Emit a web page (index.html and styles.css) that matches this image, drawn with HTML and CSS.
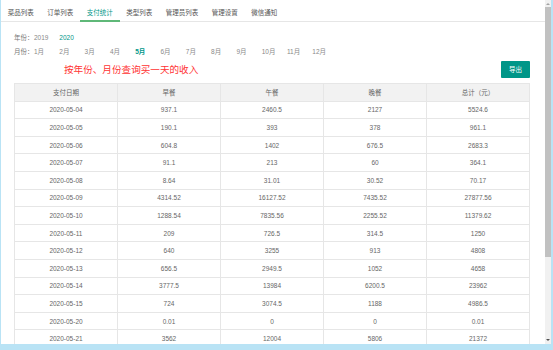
FILE: index.html
```html
<!DOCTYPE html>
<html lang="zh-CN">
<head>
  <meta charset="UTF-8">
  <meta name="viewport" content="width=device-width, initial-scale=1.0">
  <title>支付统计</title>
  <link rel="stylesheet" href="styles.css">
</head>
<body>
  <div class="frame">
    <div class="page">
      <ul class="tabs">
        <li>菜品列表</li>
        <li>订单列表</li>
        <li class="active">支付统计</li>
        <li>类型列表</li>
        <li>管理员列表</li>
        <li>管理设置</li>
        <li>微信通知</li>
      </ul>

      <div class="content">
        <div class="filter">
          <span class="label">年份：</span>
          <a>2019</a><a class="on">2020</a>
        </div>
        <div class="filter">
          <span class="label">月份：</span>
          <a>1月</a><a>2月</a><a>3月</a><a>4月</a><a class="on bold">5月</a><a>6月</a>
          <a>7月</a><a>8月</a><a>9月</a><a>10月</a><a>11月</a><a>12月</a>
        </div>

        <div class="toolbar">
          <span class="tip">按年份、月份查询买一天的收入</span>
          <button class="btn">导出</button>
        </div>

        <table class="stats">
          <thead>
            <tr><th>支付日期</th><th>早餐</th><th>午餐</th><th>晚餐</th><th>总计（元）</th></tr>
          </thead>
          <tbody>
            <tr><td>2020-05-04</td><td>937.1</td><td>2460.5</td><td>2127</td><td>5524.6</td></tr>
            <tr><td>2020-05-05</td><td>190.1</td><td>393</td><td>378</td><td>961.1</td></tr>
            <tr><td>2020-05-06</td><td>604.8</td><td>1402</td><td>676.5</td><td>2683.3</td></tr>
            <tr><td>2020-05-07</td><td>91.1</td><td>213</td><td>60</td><td>364.1</td></tr>
            <tr><td>2020-05-08</td><td>8.64</td><td>31.01</td><td>30.52</td><td>70.17</td></tr>
            <tr><td>2020-05-09</td><td>4314.52</td><td>16127.52</td><td>7435.52</td><td>27877.56</td></tr>
            <tr><td>2020-05-10</td><td>1288.54</td><td>7835.56</td><td>2255.52</td><td>11379.62</td></tr>
            <tr><td>2020-05-11</td><td>209</td><td>726.5</td><td>314.5</td><td>1250</td></tr>
            <tr><td>2020-05-12</td><td>640</td><td>3255</td><td>913</td><td>4808</td></tr>
            <tr><td>2020-05-13</td><td>656.5</td><td>2949.5</td><td>1052</td><td>4658</td></tr>
            <tr><td>2020-05-14</td><td>3777.5</td><td>13984</td><td>6200.5</td><td>23962</td></tr>
            <tr><td>2020-05-15</td><td>724</td><td>3074.5</td><td>1188</td><td>4986.5</td></tr>
            <tr><td>2020-05-20</td><td>0.01</td><td>0</td><td>0</td><td>0.01</td></tr>
            <tr><td>2020-05-21</td><td>3562</td><td>12004</td><td>5806</td><td>21372</td></tr>
          </tbody>
        </table>
      </div>
    </div>

    <!-- fake iframe scrollbar -->
    <div class="scrollbar">
      <span class="arrow up"></span>
      <div class="thumb"></div>
      <span class="arrow down"></span>
    </div>
  </div>
</body>
</html>
```

FILE: styles.css
```css
:root {
  --teal: #009688;
  --green-line: #5fb878;
  --line: #e6e6e6;
  --frame: #b9e3f5;
}
* { box-sizing: border-box; margin: 0; padding: 0; }
html, body {
  width: 553px; height: 350px; overflow: hidden;
  font-family: "Liberation Sans", "Noto Sans CJK SC", sans-serif;
  background: var(--frame);
}
/* Outer frame with light blue edges */
.frame {
  display: flex; width: 553px; height: 350px;
  padding: 0 2px 6px 1px;
  background: var(--frame);
}
.page {
  flex: 1; background: #fff; overflow: hidden;
}
/* Tabs */
.tabs {
  list-style: none; display: flex;
  height: 22px; border-bottom: 1px solid var(--line);
}
.tabs li {
  position: relative;
  padding: 4px 6.75px 0; line-height: 17px;
  font-size: 6.5px; color: #555; white-space: nowrap;
}
.tabs li.active { color: var(--teal); }
.tabs li.active::after {
  content: ''; position: absolute; left: 0; right: 0; bottom: -1px;
  border-bottom: 2px solid var(--green-line);
}
/* Year / month filters */
.content { padding: 8px 15px 0 13px; }
.filter {
  display: flex; height: 14px; align-items: center;
  font-size: 6.5px; color: #888;
}
.filter .label { width: 20px; color: #777; }
.filter a { width: 25.3px; }
.filter a.on { color: var(--teal); }
.filter a.bold { font-weight: bold; }
.toolbar {
  display: flex; align-items: center; justify-content: space-between;
  height: 17px; margin: 2.7px 0 5px;
}
.tip { margin-left: 50px; font-size: 9.6px; color: #f33; }
.btn {
  width: 29px; height: 17px; border: none; border-radius: 1px;
  background: var(--teal); color: #fff;
  font-family: inherit; font-size: 6.5px;
}
/* Table */
.stats {
  width: 516px; border-collapse: collapse; table-layout: fixed;
  font-size: 6.5px; color: #666; text-align: center;
}
.stats th, .stats td { border: 1px solid var(--line); font-weight: normal; }
.stats th { height: 18px; background: #f2f2f2; }
.stats td { height: 17.6px; }
/* Scrollbar */
.scrollbar {
  width: 6px; display: flex; flex-direction: column; align-items: center;
  background: #f1f1f1;
}
.thumb { width: 6px; height: 250px; background: #c1c1c1; }
.arrow { width: 0; height: 0; margin: 3px 0 2px; border: 2px solid transparent; }
.arrow.up { border-bottom-color: #a3a3a3; border-top-width: 0; }
.arrow.down { margin-top: auto; margin-bottom: 3px; border-top-color: #505050; border-bottom-width: 0; }
```
